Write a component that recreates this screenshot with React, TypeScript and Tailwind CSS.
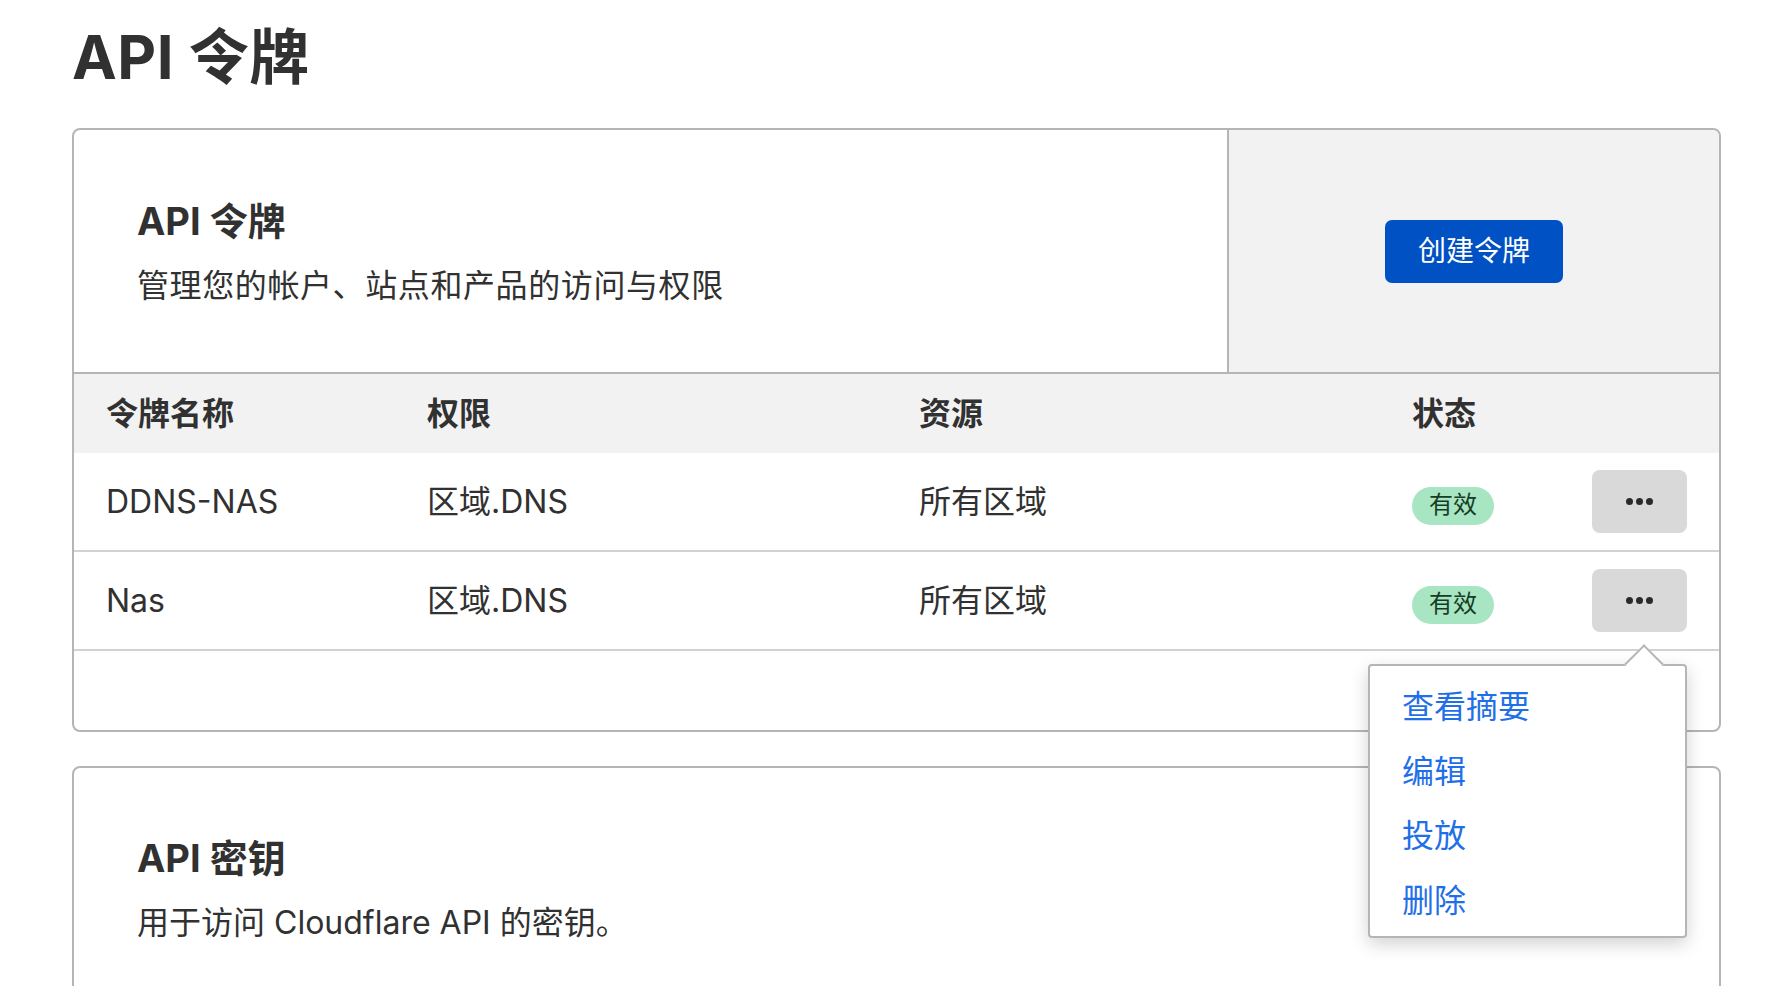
import React from 'react';

const font = { fontFamily: '"Inter", "Noto Sans CJK SC", sans-serif' };

interface Token {
  name: string;
  permission: string;
  resource: string;
  status: string;
}

const tokens: Token[] = [
  { name: 'DDNS-NAS', permission: '区域.DNS', resource: '所有区域', status: '有效' },
  { name: 'Nas', permission: '区域.DNS', resource: '所有区域', status: '有效' },
];

const cols = 'grid grid-cols-[321px_492px_493px_180px_95px] items-center px-[32px]';

const MoreButton: React.FC = () => (
  <button className="w-[95px] h-[63px] rounded-[8px] bg-[#d9d9d9] flex items-center justify-center gap-[3px]">
    <span className="w-[7px] h-[7px] rounded-full bg-[#2a2a2a]" />
    <span className="w-[7px] h-[7px] rounded-full bg-[#2a2a2a]" />
    <span className="w-[7px] h-[7px] rounded-full bg-[#2a2a2a]" />
  </button>
);

const ActionMenu: React.FC = () => (
  <div className="absolute top-[534px] right-[32px] w-[319px] h-[274px] bg-white border-2 border-[#b5b5b5] rounded-[4px] shadow-[0_6px_18px_rgba(0,0,0,0.18)] z-10 pt-[9px] pl-[32px]">
    <div className="absolute top-[-16px] right-[27px] w-[28px] h-[28px] bg-white border-t-2 border-l-2 border-[#b5b5b5] rotate-45" />
    {['查看摘要', '编辑', '投放', '删除'].map((item) => (
      <div key={item} className="text-[32px] leading-[64.5px] text-[#1f6fe8] cursor-pointer">
        {item}
      </div>
    ))}
  </div>
);

export default function App() {
  return (
    <div className="min-h-screen bg-white text-[#313131] pl-[72px] pr-[45px] pt-[20px]" style={font}>
      <h1 className="text-[60px] leading-[74px] font-bold tracking-[0.5px]">API 令牌</h1>

      <div className="relative mt-[34px] border-2 border-[#b5b5b5] rounded-[8px]">
        <div className="flex h-[244px] border-b-2 border-[#b5b5b5]">
          <div className="flex-1 flex flex-col justify-center pl-[63px] pt-[6px]">
            <h2 className="text-[38px] leading-[46px] font-bold">API 令牌</h2>
            <p className="text-[32px] leading-[48px] mt-[18px] tracking-[0.6px]">管理您的帐户、站点和产品的访问与权限</p>
          </div>
          <div className="w-[492px] bg-[#f2f2f2] border-l-2 border-[#b5b5b5] rounded-tr-[6px] flex items-center justify-center">
            <button className="w-[178px] h-[63px] rounded-[7px] bg-[#0051c3] text-white text-[28px]">
              创建令牌
            </button>
          </div>
        </div>

        <div className={`${cols} h-[79px] bg-[#f2f2f2] text-[32px] font-bold`}>
          <div>令牌名称</div>
          <div>权限</div>
          <div>资源</div>
          <div>状态</div>
          <div />
        </div>

        {tokens.map((t) => (
          <div key={t.name} className={`${cols} h-[99px] border-b-2 border-[#d2d2d2] text-[32px]`}>
            <div>{t.name}</div>
            <div>{t.permission}</div>
            <div>{t.resource}</div>
            <div>
              <span className="inline-flex items-center justify-center w-[82px] h-[38px] pb-[2px] rounded-full bg-[#a8e5c3] text-[#163d24] text-[24px]">
                {t.status}
              </span>
            </div>
            <MoreButton />
          </div>
        ))}

        <div className="h-[79px]" />

        <ActionMenu />
      </div>

      <div className="mt-[34px] border-2 border-[#b5b5b5] rounded-[8px] h-[244px] flex flex-col justify-center pl-[63px] pt-[6px]">
        <h2 className="text-[38px] leading-[46px] font-bold">API 密钥</h2>
        <p className="text-[32px] leading-[48px] mt-[18px]">用于访问 Cloudflare API 的密钥。</p>
      </div>
    </div>
  );
}
